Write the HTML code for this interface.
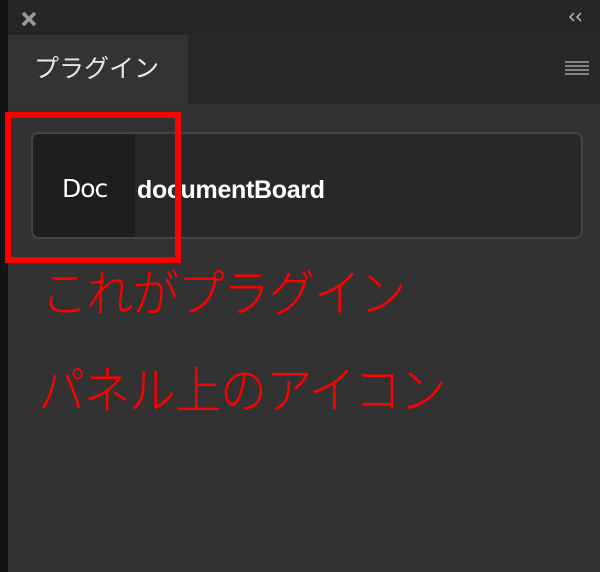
<!DOCTYPE html>
<html><head><meta charset="utf-8"><style>
*{margin:0;padding:0;box-sizing:border-box}
body{width:600px;height:572px;overflow:hidden;background:#323232;position:relative;font-family:"Liberation Sans","Noto Sans CJK JP",sans-serif}
.strip{position:absolute;left:0;top:0;width:8px;height:572px;background:#141414}
.hdr{position:absolute;left:8px;top:0;width:592px;height:35px;background:#262626}
.tabrow{position:absolute;left:8px;top:35px;width:592px;height:69px;background:#282828}
.tab{position:absolute;left:8px;top:35px;width:180px;height:69px;background:#333}
.tab span{position:absolute;left:26px;top:14px;font-size:25px;color:#e8e8e8;font-family:"Noto Sans CJK JP",sans-serif}
.card{position:absolute;left:31px;top:132px;width:552px;height:107px;background:#282828;border:2px solid #444;border-radius:8px;overflow:hidden}
.icon{position:absolute;left:0;top:0;width:102px;height:103px;background:#1e1e1e}
.doc{position:absolute;left:29px;top:40px;font-size:25px;color:#fff;font-family:"DejaVu Sans",sans-serif;letter-spacing:-1px}
.name{position:absolute;left:104px;top:42px;font-size:25px;color:#fff;font-family:"Liberation Sans",sans-serif;font-weight:bold;letter-spacing:-0.3px}
.red{position:absolute;left:5px;top:112px;width:176px;height:151px;border:6px solid #f00}
.t{position:absolute;color:#f00;font-size:47px;font-family:"Noto Sans CJK JP",sans-serif;font-weight:300;letter-spacing:-1.5px;white-space:nowrap;transform:scaleY(1.08);transform-origin:left top}
</style></head><body>
<div class="strip"></div>
<div class="hdr"></div>
<svg style="position:absolute;left:21px;top:11px" width="16" height="16"><path d="M2 2L14 14M14 2L2 14" stroke="#9a9a9a" stroke-width="3.5"/></svg>
<svg style="position:absolute;left:569px;top:12px" width="16" height="10"><path d="M5 1L1 5L5 9M12 1L8 5L12 9" stroke="#bbb" stroke-width="1.5" fill="none"/></svg>
<div class="tabrow"></div>
<div class="tab"><span>プラグイン</span></div>
<svg style="position:absolute;left:565px;top:60px" width="24" height="16"><path d="M0 2H24M0 6H24M0 10H24M0 14H24" stroke="#a0a0a0" stroke-width="1.6"/></svg>
<div class="card"><div class="icon"></div><div class="doc">Doc</div><div class="name">documentBoard</div></div>
<div class="red"></div>
<div class="t" style="left:41px;top:252px">これがプラグイン</div>
<div class="t" style="left:38px;top:349px">パネル上のアイコン</div>
</body></html>
